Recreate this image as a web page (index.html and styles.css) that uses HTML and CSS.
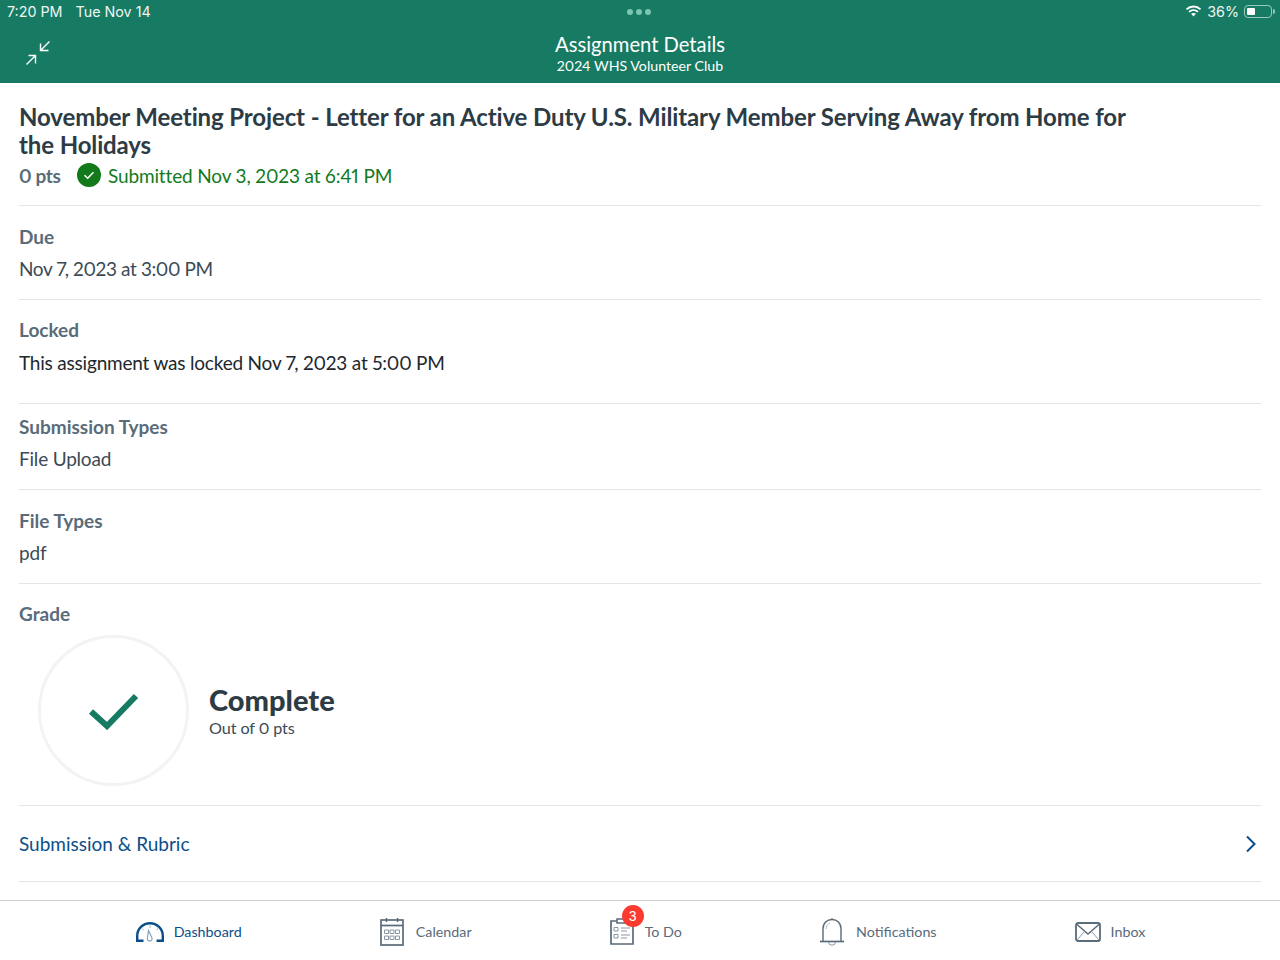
FILE: index.html
```html
<!DOCTYPE html>
<html lang="en">
<head>
<meta charset="utf-8">
<title>Assignment Details</title>
<link rel="stylesheet" href="styles.css">
</head>
<body>
<div class="app">
  <header class="header">
    <div class="status">
      <div class="status-left"><span>7:20 PM</span><span>Tue Nov 14</span></div>
      <div class="dots"><i></i><i></i><i></i></div>
      <div class="status-right">
        <svg class="wifi" width="17" height="13" viewBox="0 0 16 12"><path d="M8 2.2c2.3 0 4.4.9 6 2.4l1.2-1.3A10.6 10.6 0 0 0 8 .4 10.6 10.6 0 0 0 .8 3.3L2 4.6a8.700 8.700 0 0 1 6-2.400z" fill="#fff"/><path d="M8 5.600c1.400 0 2.600.5 3.600 1.400l1.200-1.300A7 7 0 0 0 8 3.800a7 7 0 0 0-4.800 1.900L4.400 7c1-.9 2.200-1.400 3.600-1.400z" fill="#fff"/><path d="M8 7.300c-.9 0-1.700.3-2.300.9L8 10.800l2.300-2.600c-.6-.6-1.400-.9-2.300-.9z" fill="#fff"/></svg>
        <span>36%</span>
        <span class="battery"><span class="battery-fill"></span></span>
        <span class="battery-cap"></span>
      </div>
    </div>
    <div class="nav">
      <svg class="collapse" width="26" height="26" viewBox="0 0 26 26" fill="none" stroke="#fff" stroke-width="1.400"><path d="M24.500 1.500 15.500 10.500M15.500 3.500v7h8"/><path d="M1.500 24.500 10.500 15.500M3.500 15.500h7v8"/></svg>
      <div class="nav-title">Assignment Details</div>
      <div class="nav-sub">2024 WHS Volunteer Club</div>
    </div>
  </header>

  <main class="content">
    <section class="top">
      <h1 class="title">November Meeting Project - Letter for an Active Duty U.S. Military Member Serving Away from Home for the Holidays</h1>
      <div class="meta">
        <span class="pts">0 pts</span>
        <svg class="ok" width="24" height="24" viewBox="0 0 24 24"><circle cx="12" cy="12" r="12" fill="#127a1b"/><path d="M7.500 12.300 10.700 15.300 16.500 9.300" fill="none" stroke="#fff" stroke-width="1.500"/></svg>
        <span class="submitted">Submitted Nov 3, 2023 at 6:41 PM</span>
      </div>
    </section>
    <section class="row">
      <div class="label">Due</div>
      <div class="value value-date">Nov 7, 2023 at 3:00 PM</div>
    </section>
    <section class="row row-locked">
      <div class="label">Locked</div>
      <div class="value value-dark">This assignment was locked Nov 7, 2023 at 5:00 PM</div>
    </section>
    <section class="row row-tight">
      <div class="label">Submission Types</div>
      <div class="value">File Upload</div>
    </section>
    <section class="row">
      <div class="label">File Types</div>
      <div class="value">pdf</div>
    </section>
    <section class="row row-grade">
      <div class="label">Grade</div>
      <div class="grade">
        <div class="dial">
          <svg width="50" height="38" viewBox="0 0 50 38"><path d="M2 19.500 18 34 47 4" fill="none" stroke="#177b63" stroke-width="6"/></svg>
        </div>
        <div>
          <div class="grade-main">Complete</div>
          <div class="grade-sub">Out of 0 pts</div>
        </div>
      </div>
    </section>
    <section class="link-row">
      <span>Submission &amp; Rubric</span>
      <svg width="12" height="18" viewBox="0 0 12 18"><path d="M2 1.500 9.500 9 2 16.500" fill="none" stroke="#0b4f8a" stroke-width="2"/></svg>
    </section>
  </main>

  <nav class="tabs">
    <div class="tab tab-active tab-narrow">
      <svg width="28" height="20" viewBox="0 0 28 20" fill="none"><path d="M7.500 18.800H1.200v-4.800a12.800 12.800 0 0 1 25.600 0v4.800h-6.300" stroke="#0b4f8a" stroke-width="2.400"/><path d="M12.500 8.500l3.500 7.500a2.400 2.400 0 1 1-4.700.8z" stroke="#7f9fbd" stroke-width="1.100"/><path d="M14 3.500v2M6 6.500l1.400 1.400M22 6.500l-1.400 1.400" stroke="#7f9fbd" stroke-width="1"/></svg>
      <span>Dashboard</span>
    </div>
    <div class="tab tab-wide">
      <svg width="24" height="29" viewBox="0 0 24 29" fill="none"><rect x="1" y="3" width="22" height="25" stroke="#5a6b79" stroke-width="1.700"/><path d="M1 8.500h22" stroke="#5a6b79" stroke-width="1.700"/><path d="M6.500 1v4M17.500 1v4" stroke="#5a6b79" stroke-width="1.500"/><path d="M4.500 13h4v3.500h-4zM10 13h4v3.500h-4zM15.500 13h4v3.500h-4zM4.500 19h4v3.500h-4zM10 19h4v3.500h-4zM15.500 19h4v3.500h-4z" stroke="#8b98a3" stroke-width="1"/></svg>
      <span>Calendar</span>
    </div>
    <div class="tab">
      <svg width="24" height="27" viewBox="0 0 24 27" fill="none"><path d="M7 3H1v23h22V3h-6" stroke="#5a6b79" stroke-width="1.700"/><rect x="7" y="1" width="10" height="4" stroke="#5a6b79" stroke-width="1.500"/><path d="M4 9.500h4v3.500H4zM4 16.500h4V20H4z" stroke="#8b98a3" stroke-width="1"/><path d="M11 10h9M11 13h6M11 17h9M11 20h6" stroke="#8b98a3" stroke-width="1"/></svg>
      <span class="badge">3</span>
      <span>To Do</span>
    </div>
    <div class="tab tab-bell">
      <svg width="26" height="29" viewBox="0 0 26 29" fill="none"><path d="M1 24.500h24" stroke="#5a6b79" stroke-width="1.700"/><path d="M4 24.500V12C4 6 8 2.500 13 2.500S22 6 22 12v12.500" stroke="#5a6b79" stroke-width="1.400"/><path d="M13 1v1.500" stroke="#5a6b79"/><path d="M9.500 25a3.500 3.200 0 0 0 7 0" stroke="#8b98a3"/><path d="M7 12c0-3 1.500-5 4-6" stroke="#b5bec5"/></svg>
      <span>Notifications</span>
    </div>
    <div class="tab tab-narrow">
      <svg width="26" height="20" viewBox="0 0 26 20" fill="none"><rect x="1" y="1" width="24" height="18" rx="2" stroke="#5a6b79" stroke-width="1.800"/><path d="M1.500 2 13 12 24.500 2" stroke="#5a6b79" stroke-width="1.500"/><path d="M2 18 9.500 9.500M24 18 16.500 9.500" stroke="#8b98a3"/></svg>
      <span>Inbox</span>
    </div>
  </nav>
</div>
</body>
</html>
```
FILE: styles.css
```css
* { box-sizing: border-box; }
html, body { margin: 0; padding: 0; }
body { font-family: Lato, "Liberation Sans", sans-serif; background: #fff; color: #2d3b45; font-variant-numeric: proportional-nums; }
.app { width: 1280px; height: 960px; display: flex; flex-direction: column; overflow: hidden; }

.header { background: #177b63; color: #fff; height: 83px; flex: none; }
.status { height: 23px; padding: 0 5px 0 7px; display: flex; justify-content: space-between; align-items: center; font-family: Inter, "Liberation Sans", sans-serif; font-size: 14.300px; color: #eef5f3; position: relative; }
.status-left { display: flex; gap: 13px; }
.dots { position: absolute; left: 627px; top: 9px; display: flex; gap: 3px; }
.dots i { width: 6px; height: 6px; border-radius: 50%; background: #7cc5b0; }
.status-right { display: flex; align-items: center; gap: 5px; }
.battery { width: 28px; height: 13px; border: 1px solid #9ac8bb; border-radius: 4px; padding: 2px; display: block; }
.battery-fill { display: block; width: 8px; height: 100%; background: #fff; border-radius: 1px; }
.battery-cap { width: 2px; height: 5px; background: #9ac8bb; margin-left: -4px; border-radius: 0 2px 2px 0; }

.nav { height: 60px; position: relative; text-align: center; padding-top: 9px; }
.collapse { position: absolute; left: 25px; top: 17px; }
.nav-title { font-size: 20.200px; line-height: 25px; }
.nav-sub { font-size: 14.200px; line-height: 17px; margin-top: 0; }

.content { flex: 1; padding: 0 19px; min-height: 0; }
.top { height: 123px; padding-top: 20px; border-bottom: 1px solid #e4e6e8; }
.title { margin: 0; font-size: 24px; line-height: 28px; font-weight: 700; color: #2d3b45; width: 1120px; letter-spacing: -0.120px; }
.meta { display: flex; align-items: center; height: 32px; font-size: 19px; }
.pts { color: #5a6b79; font-weight: 700; width: 58px; letter-spacing: -0.400px; }
.ok { margin-right: 7px; }
.submitted { color: #127a1b; letter-spacing: -0.140px; }

.row { height: 94px; padding-top: 18px; border-bottom: 1px solid #e4e6e8; }
.row-locked { height: 104px; padding-top: 17px; }
.row-locked .value { margin-top: 7px; }
.row-tight { height: 86px; padding-top: 10px; }
.row-grade { height: 222px; padding-top: 17px; }
.label { font-size: 19px; line-height: 26px; font-weight: 700; color: #5a6b79; }
.value { font-size: 19px; line-height: 26px; margin-top: 6px; color: #3b4a55; letter-spacing: -0.200px; }
.value-date { letter-spacing: -0.380px; }
.value-dark { color: #20282e; }

.grade { display: flex; align-items: center; margin: 8px 0 0 19px; gap: 20px; }
.dial { width: 151px; height: 151px; border: 3px solid #f2f3f4; border-radius: 50%; display: flex; align-items: center; justify-content: center; }
.grade-main { font-size: 29px; line-height: 32px; font-weight: 900; color: #2d3b45; margin-top: 1px; }
.grade-sub { font-size: 16.200px; line-height: 22px; margin-top: 1px; color: #3b4a55; letter-spacing: -0.100px; }

.link-row { height: 76px; display: flex; align-items: center; justify-content: space-between; padding-right: 4px; border-bottom: 1px solid #e4e6e8; font-size: 19px; color: #0b4f8a; }

.tabs { height: 60px; flex: none; border-top: 1px solid #cfd1d2; display: flex; justify-content: center; align-items: center; gap: 138px; padding: 2px 0 0 1px; }
.tab { display: flex; align-items: center; gap: 11px; font-size: 14.300px; color: #5a6b79; position: relative; }
.tab-active { color: #0b4f8a; }
.tab-narrow { gap: 10px; }
.tab-wide { gap: 12px; }
.tab-bell { margin-left: -1px; }
.badge { position: absolute; left: 12px; top: -13px; width: 22px; height: 22px; border-radius: 50%; background: #fb3b30; color: #fff; font-size: 14px; text-align: center; line-height: 22px; font-family: "Liberation Sans", sans-serif; }
```
